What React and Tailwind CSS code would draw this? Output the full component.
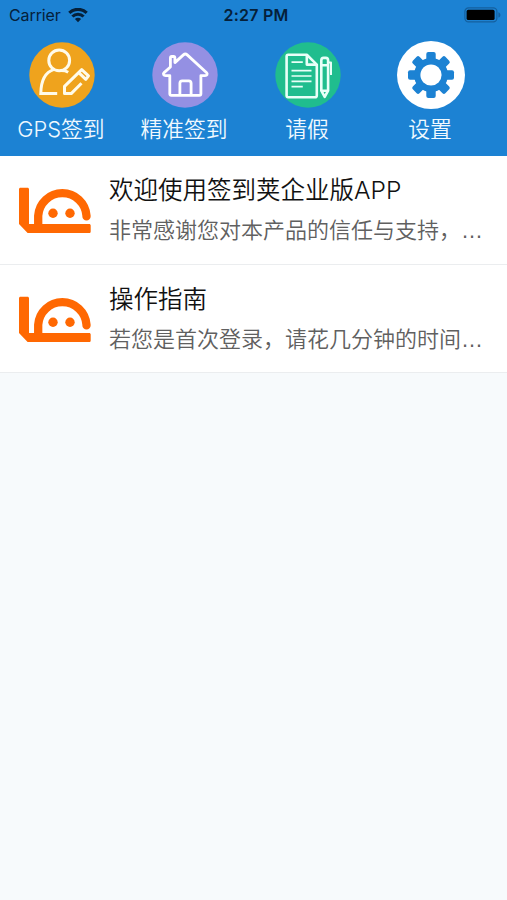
import React from 'react';

const WifiIcon = () => (
  <svg width="20" height="15" viewBox="0 0 20 15" fill="none" stroke="#05203a" strokeWidth="3.1">
    <path d="M1.3 4.9a12.4 12.4 0 0 1 17.4 0" />
    <path d="M4.4 8.5a8 8 0 0 1 11.2 0" />
    <path d="M10 14.200 6.900 11.100a4.400 4.400 0 0 1 6.200 0z" fill="#05203a" stroke="none" />
  </svg>
);

const BatteryIcon = () => (
  <svg width="37" height="16" viewBox="0 0 37 16" fill="none">
    <rect x="0.9" y="0.9" width="32" height="14" rx="3.6" stroke="#14609f" strokeWidth="1.2" />
    <rect x="2.6" y="2.8" width="28" height="10.2" rx="1.6" fill="#000" />
    <path d="M34.4 5.2c1.6.6 2 1.6 2 2.7s-.4 2.1-2 2.7z" fill="#14609f" />
  </svg>
);

const GpsIcon = () => (
  <svg width="68" height="68" viewBox="0 0 68 68" fill="none" stroke="#fffbea" strokeWidth="3">
    <circle cx="34" cy="34" r="32.7" fill="#efa31d" stroke="none" />
    <circle cx="31.2" cy="19.4" r="10.4" />
    <path d="M26 28.400C18 31 13 38 12.800 52.400h16.400" />
    <path d="M33 29.600c3 0 5 .300 7.200 1.600" />
    <path d="M53.500 42.200 43.200 52.600H36.500V45.400L53.700 28.600l6.800 6.200-2.700 3.500-7.300-6.900" strokeLinejoin="round" />
  </svg>
);

const HouseIcon = () => (
  <svg width="68" height="68" viewBox="0 0 68 68" fill="none" stroke="#fff" strokeWidth="2.8" strokeLinejoin="round">
    <circle cx="34" cy="34" r="32.7" fill="#9490e3" stroke="none" />
    <path d="M18.800 52.800V34.600h-4.200c-2 0-2.900-1.600-1.500-3l6.300-5.600V17c0-.9.500-1.500 1.400-1.500h1.700c.9 0 1.400.6 1.400 1.500v4.600l8.500-7.700c1.200-1.100 2.600-1.100 3.800 0l19.200 17.600c1.500 1.500.7 3.100-1.400 3.100h-4.100v18.200c0 1-.6 1.600-1.600 1.600H20.400c-1 0-1.600-.6-1.600-1.600z" />
    <path d="M28.900 54.400V42.300c0-1.500.8-2.400 2.300-2.400h6.600c1.500 0 2.300.9 2.300 2.400v12.100" />
  </svg>
);

const LeaveIcon = () => (
  <svg width="68" height="68" viewBox="0 0 68 68" fill="none" stroke="#e9fff8" strokeWidth="2.6" strokeLinejoin="round">
    <circle cx="34" cy="34" r="32.7" fill="#20bd8e" stroke="none" />
    <path d="M14.2 13.8h18.6l10 9.8v30.800c0 1.200-.6 1.800-1.800 1.800H14.200c-1 0-1.600-.6-1.600-1.600V15.400c0-1 .6-1.600 1.600-1.600z" />
    <path d="M32.8 13.800v9.800h10" />
    <path d="M17.5 21.200h11.300M17.500 29.700h20M17.500 35h20M17.500 40.300h20M17.500 45.700h11.300" strokeWidth="1.7" />
    <path d="M47.3 19.500c0-1.700.8-2.600 2.300-2.600h2.200c1.500 0 2.300.9 2.300 2.600v30.200l-3.400 6.200-3.400-6.200zM47.300 24.200h6.800M47.300 49.700h6.800" />
    <path d="M54.2 21.500h2.800v12.600" strokeWidth="2" />
  </svg>
);

const TEETH = [0, 45, 90, 135];

const GearIcon = () => (
  <svg width="68" height="68" viewBox="0 0 68 68" fill="#1c82d3">
    <circle cx="34" cy="34" r="34" fill="#fff" />
    {TEETH.map((deg) => (
      <rect key={deg} x="29.3" y="11" width="9.4" height="46" rx="2" transform={`rotate(${deg} 34 34)`} />
    ))}
    <circle cx="34" cy="34" r="17" />
    <circle cx="34" cy="34" r="10.6" fill="#fff" />
  </svg>
);

const Logo = () => (
  <svg width="74" height="49" viewBox="0 0 74 49" fill="#ff6802" className="shrink-0">
    <path d="M2.6 1.7h6.8c1 0 1.6.6 1.6 1.6V38h60c1.1 0 1.7.6 1.7 1.6v5.8c0 1-.6 1.600-1.700 1.600H9.600L1 38V3.300c0-1 .6-1.600 1.600-1.600z" />
    <path d="M20.2 40V29.8a24.2 24.2 0 0 1 48.3 0v.6" fill="none" stroke="#ff6802" strokeWidth="8.3" strokeLinecap="round" />
    <circle cx="35" cy="27.3" r="4.7" />
    <circle cx="52" cy="27.3" r="4.7" />
  </svg>
);

const actions = [
  { label: 'GPS签到', Icon: GpsIcon },
  { label: '精准签到', Icon: HouseIcon },
  { label: '请假', Icon: LeaveIcon },
  { label: '设置', Icon: GearIcon },
];

const messages = [
  { title: '欢迎使用签到荚企业版APP', summary: '非常感谢您对本产品的信任与支持，' },
  { title: '操作指南', summary: '若您是首次登录，请花几分钟的时间' },
];

export default function App() {
  return (
    <div className="w-full h-screen overflow-hidden bg-[#f7fafc] font-['Inter','Noto_Sans_CJK_SC',sans-serif]">
      <header className="h-[156px] bg-[#1c82d3]">
        <div className="h-[30px] pl-[9px] pr-1.5 grid grid-cols-3 items-center text-[#05203a]">
          <div className="flex items-center gap-[7px]">
            <span className="text-[16px] leading-[30px] tracking-[-0.1px]">Carrier</span>
            <WifiIcon />
          </div>
          <span className="pl-0.5 text-center text-[16px] leading-[30px] font-semibold tracking-[0.2px]">2:27 PM</span>
          <div className="flex justify-end">
            <BatteryIcon />
          </div>
        </div>
        <nav className="flex pt-[11px]">
          {actions.map(({ label, Icon }) => (
            <button key={label} className="w-[123px] flex flex-col items-center">
              <span className="pl-px">
                <Icon />
              </span>
              <span className="mt-1 -ml-px text-[21.8px] leading-8 font-[350] text-[#f0f9ff] whitespace-nowrap">{label}</span>
            </button>
          ))}
        </nav>
      </header>

      <main>
        {messages.map(({ title, summary }) => (
          <div key={title} className="h-[108.5px] flex items-start gap-[17px] pl-[18px] bg-white border-b border-[#ebedef]">
            <div className="pt-[30px]">
              <Logo />
            </div>
            <div className="pt-4 min-w-0">
              <h2 className="text-[24.5px] leading-9 font-[350] text-[#111] whitespace-nowrap">{title}</h2>
              <p className="mt-1.5 text-[22px] leading-8 font-[350] text-[#606060] whitespace-nowrap">
                {summary}
                <span className="font-['Liberation_Sans',sans-serif]">…</span>
              </p>
            </div>
          </div>
        ))}
      </main>
    </div>
  );
}
